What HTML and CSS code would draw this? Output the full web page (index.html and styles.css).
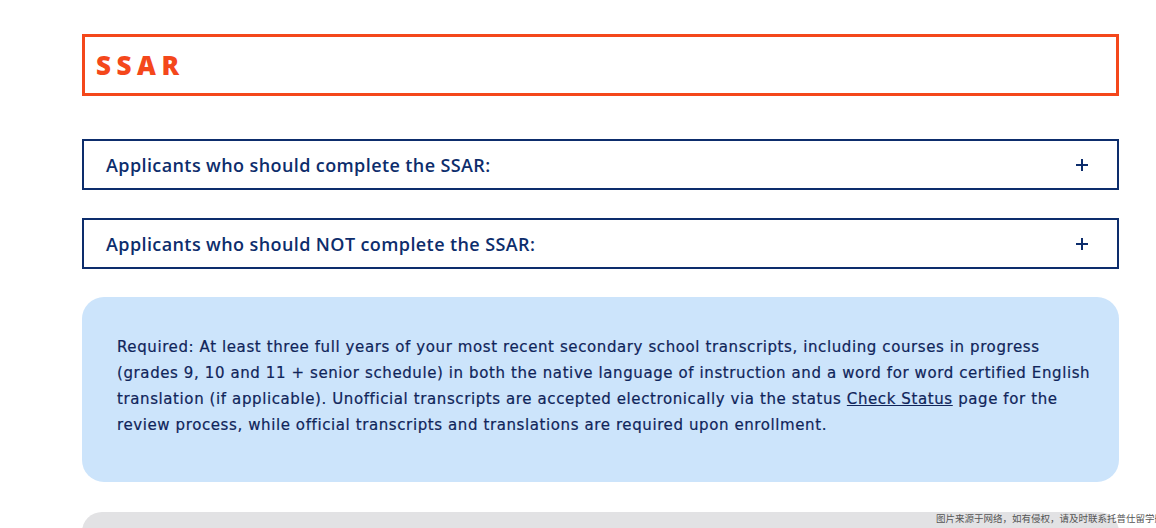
FILE: index.html
```html
<!DOCTYPE html>
<html lang="en">
<head>
    <meta charset="UTF-8">
    <meta name="viewport" content="width=device-width, initial-scale=1.0">
    <title>SSAR</title>
    <link rel="stylesheet" href="styles.css">
</head>
<body>
    <div class="page">
        <div class="section-title">
            <h2>SSAR</h2>
        </div>

        <div class="accordion">
            <span>Applicants who should complete the SSAR:</span>
            <svg class="plus" width="12" height="12" viewBox="0 0 12 12"><path d="M6 0v12M0 6h12" stroke="#0d2d6c" stroke-width="2"/></svg>
        </div>

        <div class="accordion">
            <span>Applicants who should NOT complete the SSAR:</span>
            <svg class="plus" width="12" height="12" viewBox="0 0 12 12"><path d="M6 0v12M0 6h12" stroke="#0d2d6c" stroke-width="2"/></svg>
        </div>

        <div class="note">
            <p>Required: At least three full years of your most recent secondary school transcripts, including courses in progress (grades 9, 10 and 11 + senior schedule) in both the native language of instruction and a word for word certified English translation (if applicable). Unofficial transcripts are accepted electronically via the status <a href="#">Check Status</a> page for the review process, while official transcripts and translations are required upon enrollment.</p>
        </div>

        <div class="note grey"></div>
    </div>
    <div class="watermark">图片来源于网络，如有侵权，请及时联系托普仕留学删除</div>
</body>
</html>
```

FILE: styles.css
```css
body {
    margin: 0;
    background: #fff;
    font-family: "Open Sans", Arial, sans-serif;
    overflow: hidden;
}
.page {
    width: 1037px;
    margin-left: 82px;
    padding-top: 34px;
}
.section-title {
    border: 3px solid #f4471b;
    height: 56px;
    display: flex;
    align-items: center;
    padding-left: 11px;
}
.section-title h2 {
    margin: 0;
    color: #f4471b;
    font-family: "Open Sans", sans-serif;
    font-weight: 800;
    font-size: 26px;
    letter-spacing: 5.5px;
}
.accordion {
    margin-top: 43px;
    border: 2px solid #0d2d6c;
    height: 47px;
    display: flex;
    align-items: center;
    justify-content: space-between;
    padding: 0 29px 0 22px;
    color: #0d2d6c;
    font-size: 18px;
    font-weight: 600;
    letter-spacing: 0.4px;
}
.accordion + .accordion {
    margin-top: 28px;
}
.note {
    margin-top: 28px;
    background: #cce4fb;
    border-radius: 22px;
    padding: 37px 26px 44px 35px;
}
.note p {
    margin: 0;
    color: #10255a;
    font-family: "DejaVu Sans", sans-serif;
    font-size: 15px;
    line-height: 26px;
    letter-spacing: 0.6px;
    -webkit-text-stroke: 0.2px #10255a;
}
.note a {
    color: #10255a;
}
.grey {
    background: #e2e2e4;
    height: 40px;
    margin-top: 30px;
    padding: 0;
}
.watermark {
    position: absolute;
    left: 936px;
    top: 511px;
    font-family: "Noto Sans CJK SC", sans-serif;
    font-size: 9.5px;
    color: #555;
    white-space: nowrap;
}
```
